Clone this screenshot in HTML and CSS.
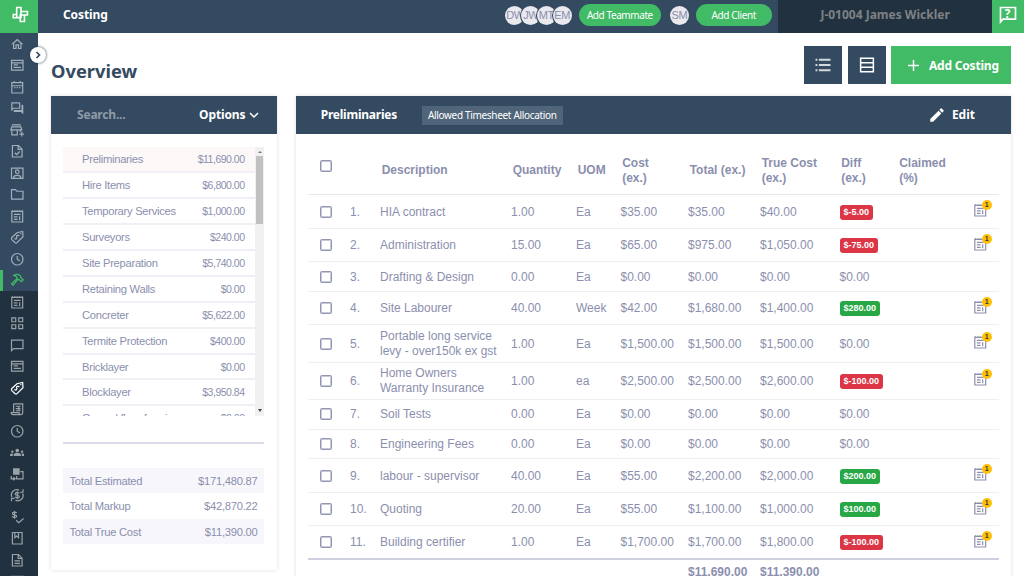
FILE: index.html
```html
<!DOCTYPE html>
<html lang="en">
<head>
<meta charset="utf-8">
<title>Costing</title>
<link rel="stylesheet" href="styles.css">
</head>
<body>
<svg class="defs" aria-hidden="true">
  <symbol id="home" viewBox="0 0 24 24"><path class="f" d="M12 5.69l5 4.5V18h-2v-6H9v6H7v-7.81l5-4.5M12 3L2 12h3v8h6v-6h2v6h6v-8h3L12 3z"/></symbol>
  <symbol id="card" viewBox="0 0 24 24"><path class="s" d="M2.5 4h19v16h-19zM2.5 8h19M6 11.5h7M6 15.5h12"/></symbol>
  <symbol id="calendar" viewBox="0 0 24 24"><path class="s" d="M3 4.5h18v17H3zM3 9.5h18M7 1.5v3M17 1.5v3"/><path class="s" stroke-dasharray="2 2" d="M7 12.5h11"/></symbol>
  <symbol id="forum" viewBox="0 0 24 24"><path class="f" d="M15 4v7H5.17L4 12.17V4h11m1-2H3c-.55 0-1 .45-1 1v14l4-4h10c.55 0 1-.45 1-1V3c0-.55-.45-1-1-1zm5 4h-2v9H6v2c0 .55.45 1 1 1h11l4 4V7c0-.55-.45-1-1-1z"/></symbol>
  <symbol id="store" viewBox="0 0 24 24"><path class="s" d="M3 3h15M3 6.5h15l1.5 5h-18zM3 12v7.5h9V12M17 12v3M19.500 14.500v8M15.500 18.500h8"/></symbol>
  <symbol id="filecheck" viewBox="0 0 24 24"><path class="s" d="M4 2.500h10l6 6v13H4zM13.500 3v6H20M8 14.500l3 3 5-5"/></symbol>
  <symbol id="contact" viewBox="0 0 24 24"><path class="s" d="M2.500 3.500h19v17h-19zM6 20c0-6 12-6 12 0"/><circle class="s" cx="12" cy="9.500" r="3"/></symbol>
  <symbol id="folder" viewBox="0 0 24 24"><path class="s" d="M2.500 4.500H9l2.500 2.500h10v13h-19z"/></symbol>
  <symbol id="notes" viewBox="0 0 24 24"><path class="s" d="M3 4h18v17.500H3z"/><path class="s" stroke-dasharray="2 2" d="M3 3h18"/><path class="s" d="M6.500 9h11M6.500 13h6M6.500 17h6M16 12v6.500"/></symbol>
  <symbol id="tag" viewBox="0 0 24 24"><path class="s" d="M3 12.500L11.500 4.500l9.500-2 .5 8.500-10 10c-1 1-2 1-3 0L3 16c-.8-.8-.8-2.700 0-3.500z"/><circle class="f" cx="18" cy="6" r="1.200"/><path class="s" d="M14 9.500c-2-1.500-4 0-3 2.200s-.5 4-3.500 2.800M13.500 8l2 2M7.500 13.500l2 2"/></symbol>
  <symbol id="clock" viewBox="0 0 24 24"><circle class="s" cx="12" cy="12" r="9.500"/><path class="s" d="M12 6.500V12l4.500 3"/></symbol>
  <symbol id="hammer" viewBox="0 0 24 24"><path class="s" d="M6 4c5-3 9-2 12 1.500l-.5 2 4.500 4-3 3-4.500-4-2 .5L5 20.500 2.500 18 12 9 10 5.500z"/></symbol>
  <symbol id="grid" viewBox="0 0 24 24"><path class="s" d="M3 3h6.500v6.500H3zM14.500 3H21v6.500h-6.500zM3 14.500h6.500V21H3zM14.500 14.500H21V21h-6.500z"/></symbol>
  <symbol id="chat" viewBox="0 0 24 24"><path class="s" d="M2.500 3.500h19v14H6l-3.500 3.500z"/></symbol>
  <symbol id="receipt" viewBox="0 0 24 24"><path class="s" d="M6 3h15v14.500c0 2-1 3.500-3 3.500H5c-2 0-3-1.500-3-3.500h13c0 2 1 3.500 3 3.500M6 3v14M9.500 7h8M9.500 11h8M9.500 14.500h8M14.500 7v7"/></symbol>
  <symbol id="people" viewBox="0 0 24 24"><path class="f" d="M4 13c1.100 0 2-.9 2-2s-.9-2-2-2-2 .9-2 2 .9 2 2 2zm1.130 1.100C4.760 14.040 4.390 14 4 14c-.99 0-1.930.21-2.780.58C.48 14.900 0 15.620 0 16.430V18h4.500v-1.610c0-.83.23-1.610.63-2.290zM20 13c1.100 0 2-.9 2-2s-.9-2-2-2-2 .9-2 2 .9 2 2 2zm4 3.430c0-.81-.48-1.530-1.220-1.850-.85-.37-1.790-.58-2.780-.58-.39 0-.76.04-1.130.1.4.68.63 1.460.63 2.290V18H24v-1.570zM16.240 13.650C15.070 13.130 13.630 12.750 12 12.750s-3.070.39-4.240.9C6.680 14.130 6 15.210 6 16.390V18h12v-1.610c0-1.180-.68-2.260-1.760-2.740zM9 9c0 1.660 1.340 3 3 3s3-1.340 3-3-1.340-3-3-3-3 1.340-3 3z"/></symbol>
  <symbol id="transfer" viewBox="0 0 24 24"><path class="f" d="M5 2h11v11H5z"/><path class="s" d="M17 7.500h4.500v12H11V15M2 15v4.500h6M5.500 17l3 2.500-3 2.500"/></symbol>
  <symbol id="exchange" viewBox="0 0 24 24"><path class="s" d="M3 15C0 7 7 1 15 3.500M21 9c3 8-4 14-12 11.500M21.500 2v5h-5M2.500 22v-5h5"/><path class="s" d="M15.500 9c-1-2-7-2-7 .8 0 3 7 1.500 7 4.500 0 2.700-6 2.700-7.300.3M12 5.500v13"/></symbol>
  <symbol id="paid" viewBox="0 0 24 24"><path class="s" d="M11 5c-1-2-7-2-7 .8 0 3 7 1.500 7 4.500 0 2.700-6 2.700-7.300.3M7.500 1.500v13M10 17l4.500 4 8-7"/></symbol>
  <symbol id="book" viewBox="0 0 24 24"><path class="s" d="M4 2.500h16v19H4zM8 3v8l3-2.500 3 2.500V3"/></symbol>
  <symbol id="doc" viewBox="0 0 24 24"><path class="s" d="M4 2.500h10l6 6v13H4zM13.500 3v6H20M7.500 13h9M7.500 17h9"/></symbol>
</svg>

<header class="topbar">
  <a class="logo"><svg viewBox="0 0 38 33"><path d="M16.700 7.500h4.300v10h-4.300zM21 11.500h6.500V15H21M20.300 15h4.200v6.500h-4.200zM20.300 17.700h-7v-3.200h3.400"/></svg></a>
  <h1 class="page-name">Costing</h1>
  <div class="team"><span class="avatar">DW</span><span class="avatar">JW</span><span class="avatar">MT</span><span class="avatar">EM</span></div>
  <button class="pill teammate">Add Teammate</button>
  <span class="avatar client">SM</span>
  <button class="pill add-client">Add Client</button>
  <div class="job">J-01004 James Wickler</div>
  <a class="help"><svg viewBox="0 0 24 24"><path d="M3 3h18v14H6l-3 3.500z"/><text x="8" y="15">?</text></svg></a>
</header>

<div class="shell">
  <nav class="sidebar">
    <div class="nav-main">
      <a><svg><use href="#home"/></svg></a><a><svg><use href="#card"/></svg></a><a><svg><use href="#calendar"/></svg></a><a><svg><use href="#forum"/></svg></a><a><svg><use href="#store"/></svg></a><a><svg><use href="#filecheck"/></svg></a><a><svg><use href="#contact"/></svg></a><a><svg><use href="#folder"/></svg></a><a><svg><use href="#notes"/></svg></a><a><svg><use href="#tag"/></svg></a><a><svg><use href="#clock"/></svg></a><a class="active"><svg><use href="#hammer"/></svg></a>
    </div>
    <div class="nav-job">
      <a><svg><use href="#notes"/></svg></a><a><svg><use href="#grid"/></svg></a><a><svg><use href="#chat"/></svg></a><a><svg><use href="#card"/></svg></a><a class="current"><svg><use href="#tag"/></svg></a><a><svg><use href="#receipt"/></svg></a><a><svg><use href="#clock"/></svg></a><a><svg><use href="#people"/></svg></a><a><svg><use href="#transfer"/></svg></a><a><svg><use href="#exchange"/></svg></a><a><svg><use href="#paid"/></svg></a><a><svg><use href="#book"/></svg></a><a><svg><use href="#doc"/></svg></a><a><svg><use href="#card"/></svg></a>
    </div>
    <button class="expand" aria-label="Expand menu"><svg viewBox="0 0 16 16"><path d="M6.500 5l3 3-3 3"/></svg></button>
  </nav>

  <main class="content">
    <div class="title-row">
      <h2>Overview</h2>
      <div class="actions">
        <button class="square"><svg class="list-icon" viewBox="0 0 24 24"><path d="M2 5h2.500M2 12h2.500M2 19h2.500M6.500 5H22M6.500 12H22M6.500 19H22"/></svg></button>
        <button class="square"><svg class="rows-icon" viewBox="0 0 24 24"><path d="M3.500 3h17v18h-17zM4 9h16M4 15h16"/></svg></button>
        <button class="add"><svg viewBox="0 0 12 12"><path d="M6 0v12M0 6h12"/></svg><span>Add Costing</span></button>
      </div>
    </div>

    <div class="panels">
      <section class="panel summary">
        <header class="panel-head"><span class="search">Search...</span><span class="options">Options</span><svg class="chev" viewBox="0 0 10 10"><path d="M1 3l4 4 4-4"/></svg></header>
        <div class="scroll">
          <ul class="cats">
            <li class="on"><span>Preliminaries</span><b>$11,690.00</b></li>
            <li><span>Hire Items</span><b>$6,800.00</b></li>
            <li><span>Temporary Services</span><b>$1,000.00</b></li>
            <li><span>Surveyors</span><b>$240.00</b></li>
            <li><span>Site Preparation</span><b>$5,740.00</b></li>
            <li><span>Retaining Walls</span><b>$0.00</b></li>
            <li><span>Concreter</span><b>$5,622.00</b></li>
            <li><span>Termite Protection</span><b>$400.00</b></li>
            <li><span>Bricklayer</span><b>$0.00</b></li>
            <li><span>Blocklayer</span><b>$3,950.84</b></li>
            <li><span>Ground floor framing</span><b>$0.00</b></li>
          </ul>
          <div class="track"><i class="up"></i><i class="thumb"></i><i class="down"></i></div>
        </div>
        <div class="totals">
          <p><span>Total Estimated</span><span>$171,480.87</span></p>
          <p><span>Total Markup</span><span>$42,870.22</span></p>
          <p><span>Total True Cost</span><span>$11,390.00</span></p>
        </div>
      </section>

      <section class="panel detail">
        <header class="panel-head"><span class="section-name">Preliminaries</span><span class="chip">Allowed Timesheet Allocation</span><span class="edit"><svg viewBox="0 0 24 24"><path d="M3 17.250V21h3.750L17.810 9.940l-3.750-3.750L3 17.250zM20.710 7.040a1 1 0 000-1.410l-2.340-2.340a1 1 0 00-1.410 0l-1.830 1.830 3.750 3.750 1.830-1.830z"/></svg>Edit</span></header>
        <div class="table">
          <div class="row head"><i class="box"></i><span></span><span>Description</span><span>Quantity</span><span>UOM</span><span>Cost<br>(ex.)</span><span>Total (ex.)</span><span>True Cost<br>(ex.)</span><span>Diff<br>(ex.)</span><span>Claimed<br>(%)</span></div>
          <div class="row"><i class="box"></i><span>1.</span><span>HIA contract</span><span>1.00</span><span>Ea</span><span>$35.00</span><span>$35.00</span><span>$40.00</span><span><em class="neg">$-5.00</em></span><span></span><span class="note"><svg><use href="#notes"/></svg><sup>1</sup></span></div>
          <div class="row"><i class="box"></i><span>2.</span><span>Administration</span><span>15.00</span><span>Ea</span><span>$65.00</span><span>$975.00</span><span>$1,050.00</span><span><em class="neg">$-75.00</em></span><span></span><span class="note"><svg><use href="#notes"/></svg><sup>1</sup></span></div>
          <div class="row short"><i class="box"></i><span>3.</span><span>Drafting &amp; Design</span><span>0.00</span><span>Ea</span><span>$0.00</span><span>$0.00</span><span>$0.00</span><span>$0.00</span></div>
          <div class="row"><i class="box"></i><span>4.</span><span>Site Labourer</span><span>40.00</span><span>Week</span><span>$42.00</span><span>$1,680.00</span><span>$1,400.00</span><span><em class="pos">$280.00</em></span><span></span><span class="note"><svg><use href="#notes"/></svg><sup>1</sup></span></div>
          <div class="row tall"><i class="box"></i><span>5.</span><span>Portable long service<br>levy - over150k ex gst</span><span>1.00</span><span>Ea</span><span>$1,500.00</span><span>$1,500.00</span><span>$1,500.00</span><span>$0.00</span><span></span><span class="note"><svg><use href="#notes"/></svg><sup>1</sup></span></div>
          <div class="row tall"><i class="box"></i><span>6.</span><span>Home Owners<br>Warranty Insurance</span><span>1.00</span><span>ea</span><span>$2,500.00</span><span>$2,500.00</span><span>$2,600.00</span><span><em class="neg">$-100.00</em></span><span></span><span class="note"><svg><use href="#notes"/></svg><sup>1</sup></span></div>
          <div class="row short"><i class="box"></i><span>7.</span><span>Soil Tests</span><span>0.00</span><span>Ea</span><span>$0.00</span><span>$0.00</span><span>$0.00</span><span>$0.00</span></div>
          <div class="row short"><i class="box"></i><span>8.</span><span>Engineering Fees</span><span>0.00</span><span>Ea</span><span>$0.00</span><span>$0.00</span><span>$0.00</span><span>$0.00</span></div>
          <div class="row"><i class="box"></i><span>9.</span><span>labour - supervisor</span><span>40.00</span><span>Ea</span><span>$55.00</span><span>$2,200.00</span><span>$2,000.00</span><span><em class="pos">$200.00</em></span><span></span><span class="note"><svg><use href="#notes"/></svg><sup>1</sup></span></div>
          <div class="row"><i class="box"></i><span>10.</span><span>Quoting</span><span>20.00</span><span>Ea</span><span>$55.00</span><span>$1,100.00</span><span>$1,000.00</span><span><em class="pos">$100.00</em></span><span></span><span class="note"><svg><use href="#notes"/></svg><sup>1</sup></span></div>
          <div class="row last"><i class="box"></i><span>11.</span><span>Building certifier</span><span>1.00</span><span>Ea</span><span>$1,700.00</span><span>$1,700.00</span><span>$1,800.00</span><span><em class="neg">$-100.00</em></span><span></span><span class="note"><svg><use href="#notes"/></svg><sup>1</sup></span></div>
          <div class="row foot"><span></span><span></span><span></span><span></span><span></span><span></span><span>$11,690.00</span><span>$11,390.00</span></div>
        </div>
      </section>
    </div>
  </main>
</div>
</body>
</html>
```
FILE: styles.css
```css
* { box-sizing: border-box; }
body { margin: 0; height: 576px; overflow: hidden; background: #fff; font: 12px/15px "Liberation Sans", Arial, sans-serif; color: #8b8fae; }
h1, h2, p, ul { margin: 0; padding: 0; }
button { border: 0; padding: 0; color: #fff; font-family: "Noto Sans", sans-serif; }
svg { display: block; flex: none; }
.defs { position: absolute; width: 0; height: 0; }
.f { fill: currentColor; }
.s { fill: none; stroke: currentColor; stroke-width: 2; }

.topbar { display: flex; align-items: center; height: 33px; background: #334a61; color: #fff; font-family: "Noto Sans", sans-serif; }
.logo { width: 38px; height: 33px; background: #41bb65; }
.logo path { fill: none; stroke: #fff; stroke-width: 1.6; }
.page-name { width: 443px; padding-left: 25px; margin-right: 25px; font-size: 12px; letter-spacing: -.1px; line-height: 29px; height: 33px; }
.team { display: flex; width: 68px; }
.avatar { width: 19px; height: 19px; flex: none; border-radius: 50%; background: #e9e9ee; color: #8b8fae; font: 11px/19px "Liberation Sans", sans-serif; letter-spacing: -.4px; text-align: center; overflow: hidden; margin-right: -3.300px; box-shadow: 0 0 0 1px #334a61; margin-top: -3px; }
.pill { height: 22px; margin-top: -3px; border-radius: 11px; background: #41bb65; font-size: 10px; letter-spacing: -.38px; }
.teammate { width: 82px; margin-left: 5.500px; letter-spacing: -.42px; }
.client { margin: -3px 7px 0 9px; }
.add-client { width: 76px; }
.job { width: 214px; height: 33px; margin-left: 6.500px; background: #22313f; color: #7e8285; font-size: 12px; line-height: 29px; font-weight: 700; letter-spacing: 0; text-align: center; }
.help { flex: 1; height: 33px; background: #41bb65; padding: 5px 6px; }
.help svg { width: 20px; height: 20px; }
.help path { fill: none; stroke: #fff; stroke-width: 2; }
.help text { fill: #fff; font: bold 14px "Noto Sans", sans-serif; }

.shell { display: flex; height: 543px; }
.sidebar { position: relative; width: 38px; flex: none; background: #334a61; color: #a2aeb9; }
.sidebar a { display: flex; align-items: center; justify-content: center; height: 21.500px; padding-right: 4px; }
.sidebar a svg { width: 14.500px; height: 14.500px; }
.nav-job { height: 285px; overflow: hidden; background: #22313f; color: #99a2a9; }
.sidebar .active { color: #41bb65; border-left: 3px solid #41bb65; padding-right: 7px; }
.sidebar .current { color: #fff; }
.expand { position: absolute; left: 30px; top: 14px; width: 16px; height: 16px; border-radius: 50%; background: #fff; box-shadow: 0 0 3px #26394c; }
.expand svg { width: 16px; height: 16px; }
.expand path { fill: none; stroke: #334a61; stroke-width: 1.700; }

.content { width: 986px; padding: 13px 13px 0; }
.title-row { display: flex; justify-content: space-between; height: 50px; }
h2 { color: #334a61; font: bold 18.300px/50px "Noto Sans", sans-serif; }
.actions { display: flex; }
.square { display: grid; place-items: center; width: 38px; height: 38px; margin-right: 6px; background: #334a61; }
.square + .add { margin-left: -1px; }
.square svg { width: 18px; height: 18px; }
.square path { fill: none; stroke: #fff; stroke-width: 2; }
.square .list-icon path { stroke: #d2d8dc; stroke-width: 2.600; }
.add { display: flex; align-items: center; gap: 10px; width: 120px; height: 38px; padding-left: 17px; background: #41bb65; font-size: 12px; letter-spacing: -.2px; font-weight: bold; }
.add svg { width: 11px; height: 11px; }
.add path { stroke: #fff; stroke-width: 1.600; }

.panels { display: flex; gap: 19px; }
.panel { background: #fff; box-shadow: 0 0 4px rgba(0, 0, 0, .13); }
.summary { width: 226px; height: 474px; }
.detail { width: 716px; height: 500px; }
.panel-head { display: flex; align-items: center; height: 38px; background: #334a61; color: #fff; font: bold 12px/38px "Noto Sans", sans-serif; }
.search { width: 121px; padding-left: 26px; margin-right: 27px; color: #8f9ba7; letter-spacing: -.2px; }
.options { width: 46px; letter-spacing: -.1px; }
.chev { width: 10px; height: 10px; margin-left: 4px; }
.chev path { fill: none; stroke: #fff; stroke-width: 1.500; }
.scroll { display: flex; width: 201px; height: 269px; margin: 13px 0 0 12px; overflow: hidden; }
.cats { width: 192px; list-style: none; }
.cats li { display: flex; justify-content: space-between; height: 25.950px; padding: 0 10.500px 0 19px; border-bottom: 2px solid #f0eff5; font-size: 11.200px; line-height: 24px; letter-spacing: -.28px; }
.cats b { font-weight: normal; font-size: 10.500px; letter-spacing: -.5px; }
.cats .on { background: #fcf8f8; }
.track { width: 9px; background: #f1f1f1; display: flex; flex-direction: column; align-items: center; }
.up, .down { border: 2px solid transparent; width: 0; height: 0; }
.up { border-bottom-color: #777; margin: 2px 0 3px; }
.thumb { width: 7px; height: 68px; background: #c1c1c1; }
.down { border-top: 3px solid #444; margin: auto 0 2px; }
.totals { width: 201px; margin: 26px 0 0 12px; padding-top: 24px; border-top: 2px solid #dcdce8; font-size: 11.200px; letter-spacing: -.25px; }
.totals p { display: flex; justify-content: space-between; height: 25.300px; padding: 0 6.500px; line-height: 26px; }
.totals p:nth-child(odd) { background: #f7f6fb; }

.section-name { width: 76px; margin: 0 25px; letter-spacing: -.24px; }
.chip { width: 141px; height: 19px; background: #50647a; font-size: 10px; letter-spacing: -.32px; font-weight: normal; line-height: 19px; text-align: center; }
.edit { display: flex; align-items: center; gap: 6px; margin-left: auto; padding-right: 36px; }
.edit svg { width: 18px; height: 18px; fill: #fff; }
.table { width: 691px; margin-left: 12.500px; }
.row { display: grid; grid-template-columns: 42px 30px 131px 65px 44.500px 67.500px 72px 79.500px 58px 74px 1fr; align-items: center; height: 33.500px; border-bottom: 1px solid #edeff1; white-space: nowrap; }
.row > span { margin: 1px 0 0 -.3px; }
.short { height: 29.700px; }
.tall { height: 37.300px; }
.head { height: 61.300px; padding-top: 12.500px; font-weight: bold; border-color: #e6e8ed; }
.head > span { padding-left: 1.700px; }
.head .box { margin-bottom: 9px; }
.last { border-bottom: 2px solid #cfd0df; }
.foot { height: 24px; border: 0; font-weight: bold; }
.box { width: 12px; height: 12px; margin-left: 11.500px; border: 1px solid #9295b3; border-radius: 1.500px; box-shadow: inset 0 0 0 .5px #9295b3; }
.row em { display: block; width: max-content; height: 15px; margin-left: .5px; padding: 0 3.500px; border-radius: 3px; color: #fff; font: bold 9px/15px "Liberation Sans", sans-serif; }
.neg { background: #dc3545; }
.pos { background: #28a745; }
.note { position: relative; height: 16px; }
.row > .note { margin: -1px 0 0 1px; }
.note svg { width: 14.500px; height: 14.500px; }
.note sup { position: absolute; left: 9px; top: -3px; width: 10px; height: 10px; border-radius: 50%; background: #ffc107; color: #343a40; font: bold 7px/10px "Liberation Sans", sans-serif; text-align: center; }
```
